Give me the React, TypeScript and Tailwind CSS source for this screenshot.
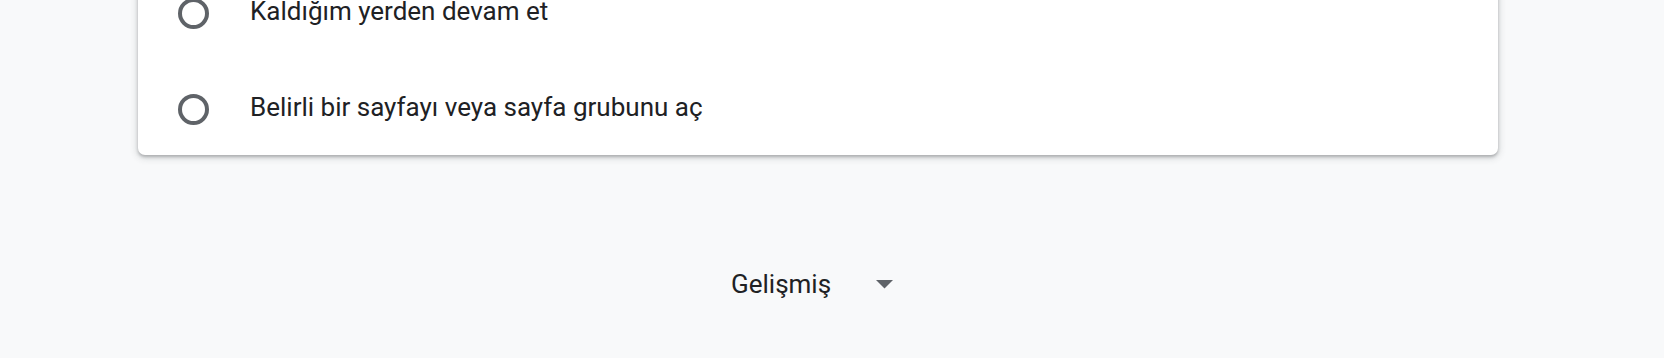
import React from 'react';

const options = ['Kaldığım yerden devam et', 'Belirli bir sayfayı veya sayfa grubunu aç'];

const Radio = () => (
  <span className="block w-[31px] h-[31px] rounded-full border-[4px] border-[#5f6368] shrink-0" />
);

export default function App() {
  return (
    <div className="h-[358px] w-full overflow-hidden bg-[#f8f9fa] font-['Roboto',sans-serif] text-[#202124]">
      <div className="ml-[138px] w-[1360px] -mt-[35px] bg-white rounded-[7px] shadow-[0_2px_3px_0_rgba(60,64,67,0.3),0_2px_6px_2px_rgba(60,64,67,0.15)]">
        {options.map((label) => (
          <div key={label} className="flex items-center h-[96px] last:h-[94px] last:pt-[2px] pl-[40px]">
            <Radio />
            <span className="ml-[41px] text-[26px] leading-[30px] pb-[4px]">{label}</span>
          </div>
        ))}
      </div>

      <div className="flex items-start mt-[114px] ml-[731px]">
        <span className="text-[26px] leading-[30px]">Gelişmiş</span>
        <svg className="ml-[45px] mt-[11px]" width="17" height="9" viewBox="0 0 17 9">
          <path d="M0 0 L17 0 L8.5 8.5 Z" fill="#5f6368" />
        </svg>
      </div>
    </div>
  );
}
